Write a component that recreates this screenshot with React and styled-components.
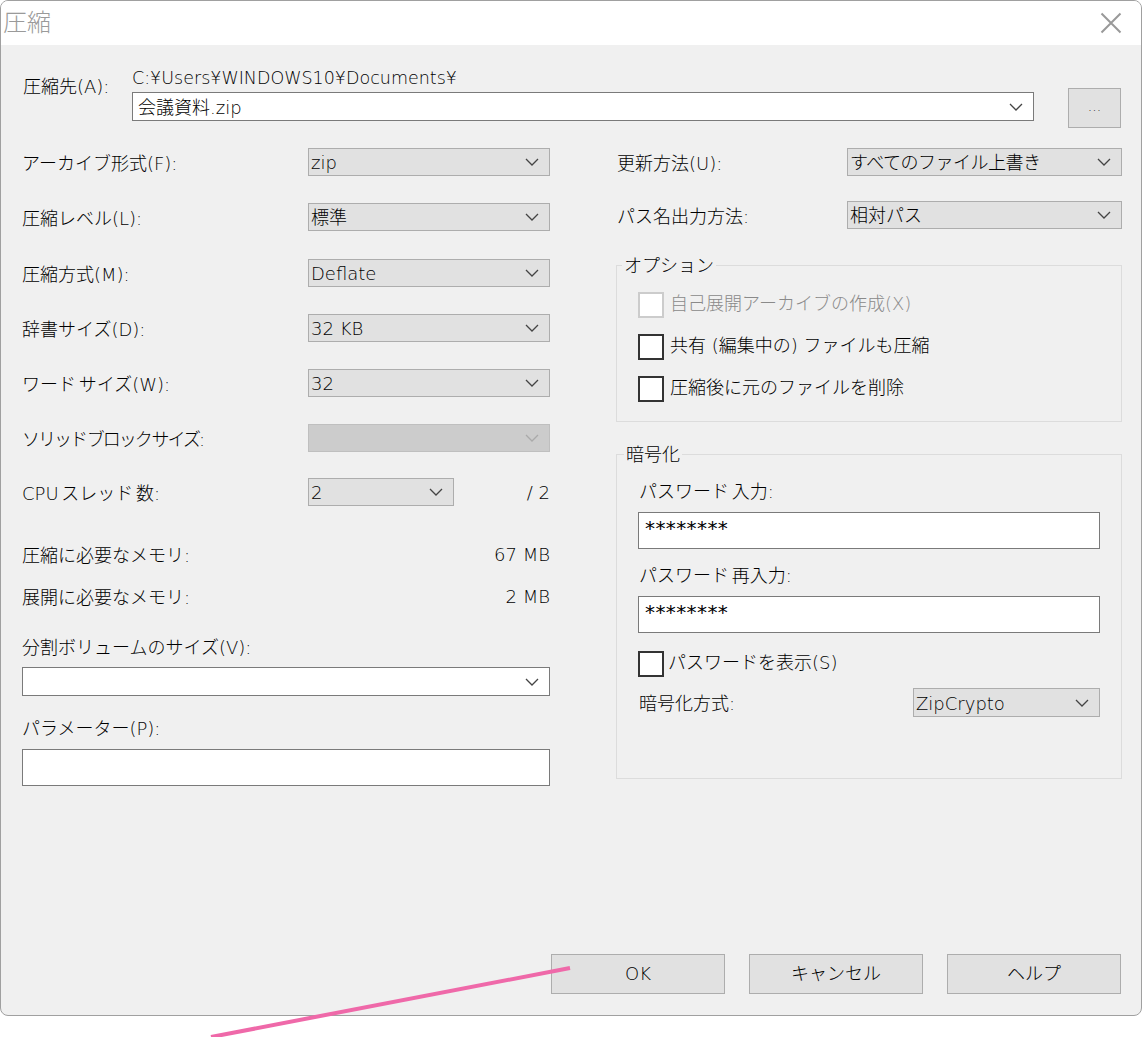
import styled, { createGlobalStyle } from 'styled-components';

const GlobalStyle = createGlobalStyle`
  html, body {
    margin: 0;
    padding: 0;
    background: #fff;
    overflow: hidden;
  }
  * {
    box-sizing: border-box;
  }
`;

const Page = styled.div`
  position: relative;
  width: 1142px;
  height: 1037px;
  font-family: "DejaVu Sans", "Noto Sans CJK JP", "Liberation Sans", sans-serif;
  font-weight: 200;
  font-size: 18px;
  line-height: 24px;
  color: #000;
`;

const Window = styled.div`
  display: flex;
  flex-direction: column;
  height: 1016px;
  border: 1px solid #a0a0a0;
  border-radius: 8px;
  overflow: hidden;
  background: #f0f0f0;
`;

const TitleBar = styled.div`
  display: flex;
  align-items: center;
  justify-content: space-between;
  flex: none;
  height: 44px;
  padding: 0 19px 0 2px;
  background: #fff;
`;

const Title = styled.div`
  font-size: 24px;
  color: #9a9a9a;
`;

const Content = styled.div`
  display: flex;
  flex: 1;
  flex-direction: column;
  padding: 23px 20px 21px 20px;
`;

const TopRow = styled.div`
  display: flex;
  height: 60px;
`;

const TopLabel = styled.div`
  width: 111px;
  margin-top: 7px;
  padding-left: 2px;
`;

const PathColumn = styled.div`
  width: 902px;
`;

const PathText = styled.div`
  height: 24px;
  line-height: 20px;
  font-size: 17.5px;
  white-space: nowrap;
`;

const BrowseButton = styled.button`
  width: 53px;
  height: 40px;
  margin: 20px 0 0 34px;
  padding: 0 0 4px;
  border: 1px solid #adadad;
  background: #e1e1e1;
  font: inherit;
  font-size: 14px;
  color: #000;
`;

const Columns = styled.div`
  display: grid;
  grid-template-columns: 529px 506px;
  column-gap: 66px;
  margin-top: 20px;
`;

const Column = styled.div`
  display: flex;
  flex-direction: column;
`;

const Row = styled.div`
  display: flex;
  align-items: center;
  height: ${(p) => p.$height || 28}px;
  margin-top: ${(p) => p.$top || 0}px;
  margin-left: ${(p) => p.$inset || 0}px;
`;

const Label = styled.div`
  flex: none;
  width: ${(p) => p.$width || 287}px;
  padding: 3px 0 0 1px;
  white-space: nowrap;
  letter-spacing: ${(p) => p.$tight || 0}px;
  word-spacing: -3px;
`;

const Value = styled.div`
  margin-left: auto;
  padding-top: 2px;
  white-space: nowrap;
`;

const Combo = styled.div`
  display: flex;
  align-items: center;
  flex: ${(p) => (p.$width ? 'none' : 1)};
  width: ${(p) => (p.$width ? `${p.$width}px` : 'auto')};
  height: ${(p) => p.$height || 28}px;
  padding: 2px 10px 0 ${(p) => p.$pad || 2}px;
  border: 1px solid #adadad;
  background: ${(p) => (p.$white ? '#fff' : p.$off ? '#cccccc' : '#e1e1e1')};
  border-color: ${(p) => (p.$white ? '#7a7a7a' : p.$off ? '#bfbfbf' : '#adadad')};
  white-space: nowrap;
  letter-spacing: ${(p) => p.$tight || 0}px;
`;

const Chevron = styled.svg`
  flex: none;
  width: 14px;
  height: 8px;
  margin: -2px 0 0 auto;
  fill: none;
  stroke: ${(p) => (p.$off ? '#aaa' : '#444')};
  stroke-width: 1.3;
`;

const FieldLabel = styled.div`
  height: 24px;
  margin-top: ${(p) => p.$top || 0}px;
  padding-left: 1px;
  word-spacing: -3px;
`;

const TextBox = styled.input`
  display: block;
  width: calc(100% - ${(p) => p.$inset || 0}px);
  height: 37px;
  margin-top: ${(p) => p.$top || 0}px;
  margin-left: ${(p) => p.$inset || 0}px;
  padding: 0 0 ${(p) => (p.$secret ? 6 : 0)}px 6px;
  border: 1px solid #7a7a7a;
  border-radius: 0;
  outline: none;
  background: #fff;
  font: inherit;
  font-size: ${(p) => (p.$secret ? 20 : 18)}px;
  font-weight: ${(p) => (p.$secret ? 400 : 200)};
  color: #000;
  letter-spacing: ${(p) => (p.$secret ? '0.4px' : 0)};
`;

const Group = styled.fieldset`
  margin: ${(p) => p.$top}px 0 0;
  padding: ${(p) => p.$padTop}px 21px ${(p) => p.$padBottom}px;
  border: 1px solid #dcdcdc;
  min-width: 0;
`;

const Legend = styled.legend`
  margin-left: ${(p) => p.$left}px;
  padding: 1px 2px 0;
  line-height: 23px;
`;

const CheckRow = styled.label`
  display: flex;
  align-items: center;
  gap: ${(p) => p.$gap || 6}px;
  height: 26px;
  margin-top: ${(p) => p.$top || 0}px;
  color: ${(p) => (p.$off ? '#8a8a8a' : 'inherit')};
`;

const CheckText = styled.span`
  padding-bottom: 3px;
  white-space: nowrap;
`;

const CheckBox = styled.input.attrs({ type: 'checkbox' })`
  flex: none;
  appearance: none;
  width: 26px;
  height: 26px;
  margin: 0;
  border: 2px solid ${(p) => (p.disabled ? '#cccccc' : '#333')};
  background: #fff;
`;

const Footer = styled.div`
  display: flex;
  justify-content: flex-end;
  gap: 24px;
  margin-top: auto;
`;

const Button = styled.button`
  width: 174px;
  height: 40px;
  padding: 0;
  border: 1px solid #adadad;
  background: #e1e1e1;
  font: inherit;
  color: #000;
`;

const Arrow = styled.svg`
  position: absolute;
  left: 0;
  top: 0;
  width: 1142px;
  height: 1037px;
  pointer-events: none;
`;

const CloseIcon = () => (
  <svg width="22" height="22" viewBox="0 0 22 22" fill="none" stroke="#999" strokeWidth="2">
    <path d="M1.5 1.5 L20.5 20.5 M20.5 1.5 L1.5 20.5" />
  </svg>
);

const Down = ({ off }) => (
  <Chevron viewBox="0 0 14 8" $off={off}>
    <path d="M1 1 L7 7 L13 1" />
  </Chevron>
);

const SelectRow = ({ label, value, top, width, off, tight, valueTight }) => (
  <Row $top={top}>
    <Label $width={width} $tight={tight}>
      {label}
    </Label>
    <Combo $off={off} $tight={valueTight}>
      {value}
      <Down off={off} />
    </Combo>
  </Row>
);

const App = () => {
  return (
    <Page>
      <GlobalStyle />
      <Window>
        <TitleBar>
          <Title>圧縮</Title>
          <CloseIcon />
        </TitleBar>
        <Content>
          <TopRow>
            <TopLabel>圧縮先(A):</TopLabel>
            <PathColumn>
              <PathText>C:¥Users¥WINDOWS10¥Documents¥</PathText>
              <Combo $white $height={29} $pad={5}>
                会議資料.zip
                <Down />
              </Combo>
            </PathColumn>
            <BrowseButton>...</BrowseButton>
          </TopRow>
          <Columns>
            <Column>
              <SelectRow label="アーカイブ形式(F):" value="zip" />
              <SelectRow label="圧縮レベル(L):" value="標準" top={27} />
              <SelectRow label="圧縮方式(M):" value="Deflate" top={28} />
              <SelectRow label="辞書サイズ(D):" value="32 KB" top={27} />
              <SelectRow label="ワード サイズ(W):" value="32" top={27} />
              <SelectRow label="ソリッド ブロック サイズ:" value="" top={27} off tight={-2} />
              <Row $top={26}>
                <Label>CPU スレッド 数:</Label>
                <Combo $width={146}>
                  2
                  <Down />
                </Combo>
                <Value>/ 2</Value>
              </Row>
              <Row $top={36} $height={24}>
                <Label>圧縮に必要なメモリ:</Label>
                <Value>67 MB</Value>
              </Row>
              <Row $top={18} $height={24}>
                <Label>展開に必要なメモリ:</Label>
                <Value>2 MB</Value>
              </Row>
              <FieldLabel $top={28}>分割ボリュームのサイズ(V):</FieldLabel>
              <Row $top={7} $height={29} $inset={1}>
                <Combo $white $height={29}>
                  <Down />
                </Combo>
              </Row>
              <FieldLabel $top={21}>パラメーター(P):</FieldLabel>
              <TextBox $top={8} $inset={1} readOnly value="" />
            </Column>
            <Column>
              <SelectRow label="更新方法(U):" value="すべてのファイル上書き" width={231} valueTight={-0.5} />
              <SelectRow label="パス名出力方法:" value="相対パス" width={231} top={25} />
              <Group $top={24} $padTop={15} $padBottom={19}>
                <Legend $left={-16}>オプション</Legend>
                <CheckRow $off>
                  <CheckBox disabled />
                  <CheckText>自己展開アーカイブの作成(X)</CheckText>
                </CheckRow>
                <CheckRow $top={16}>
                  <CheckBox />
                  <CheckText>共有 (編集中の) ファイルも圧縮</CheckText>
                </CheckRow>
                <CheckRow $top={16}>
                  <CheckBox />
                  <CheckText>圧縮後に元のファイルを削除</CheckText>
                </CheckRow>
              </Group>
              <Group $top={20} $padTop={14} $padBottom={61}>
                <Legend $left={-14}>暗号化</Legend>
                <FieldLabel>パスワード 入力:</FieldLabel>
                <TextBox $top={8} $secret readOnly value="********" />
                <FieldLabel $top={15}>パスワード 再入力:</FieldLabel>
                <TextBox $top={8} $secret readOnly value="********" />
                <CheckRow $top={18} $gap={4}>
                  <CheckBox />
                  <CheckText>パスワードを表示(S)</CheckText>
                </CheckRow>
                <Row $top={11} $height={29}>
                  <Label $width={275}>暗号化方式:</Label>
                  <Combo $height={29}>
                    ZipCrypto
                    <Down />
                  </Combo>
                </Row>
              </Group>
            </Column>
          </Columns>
          <Footer>
            <Button>OK</Button>
            <Button>キャンセル</Button>
            <Button>ヘルプ</Button>
          </Footer>
        </Content>
      </Window>
      <Arrow viewBox="0 0 1142 1037">
        <path d="M570 968 L211 1037" stroke="#ef69a9" strokeWidth="4" fill="none" />
      </Arrow>
    </Page>
  );
};

export default App;
